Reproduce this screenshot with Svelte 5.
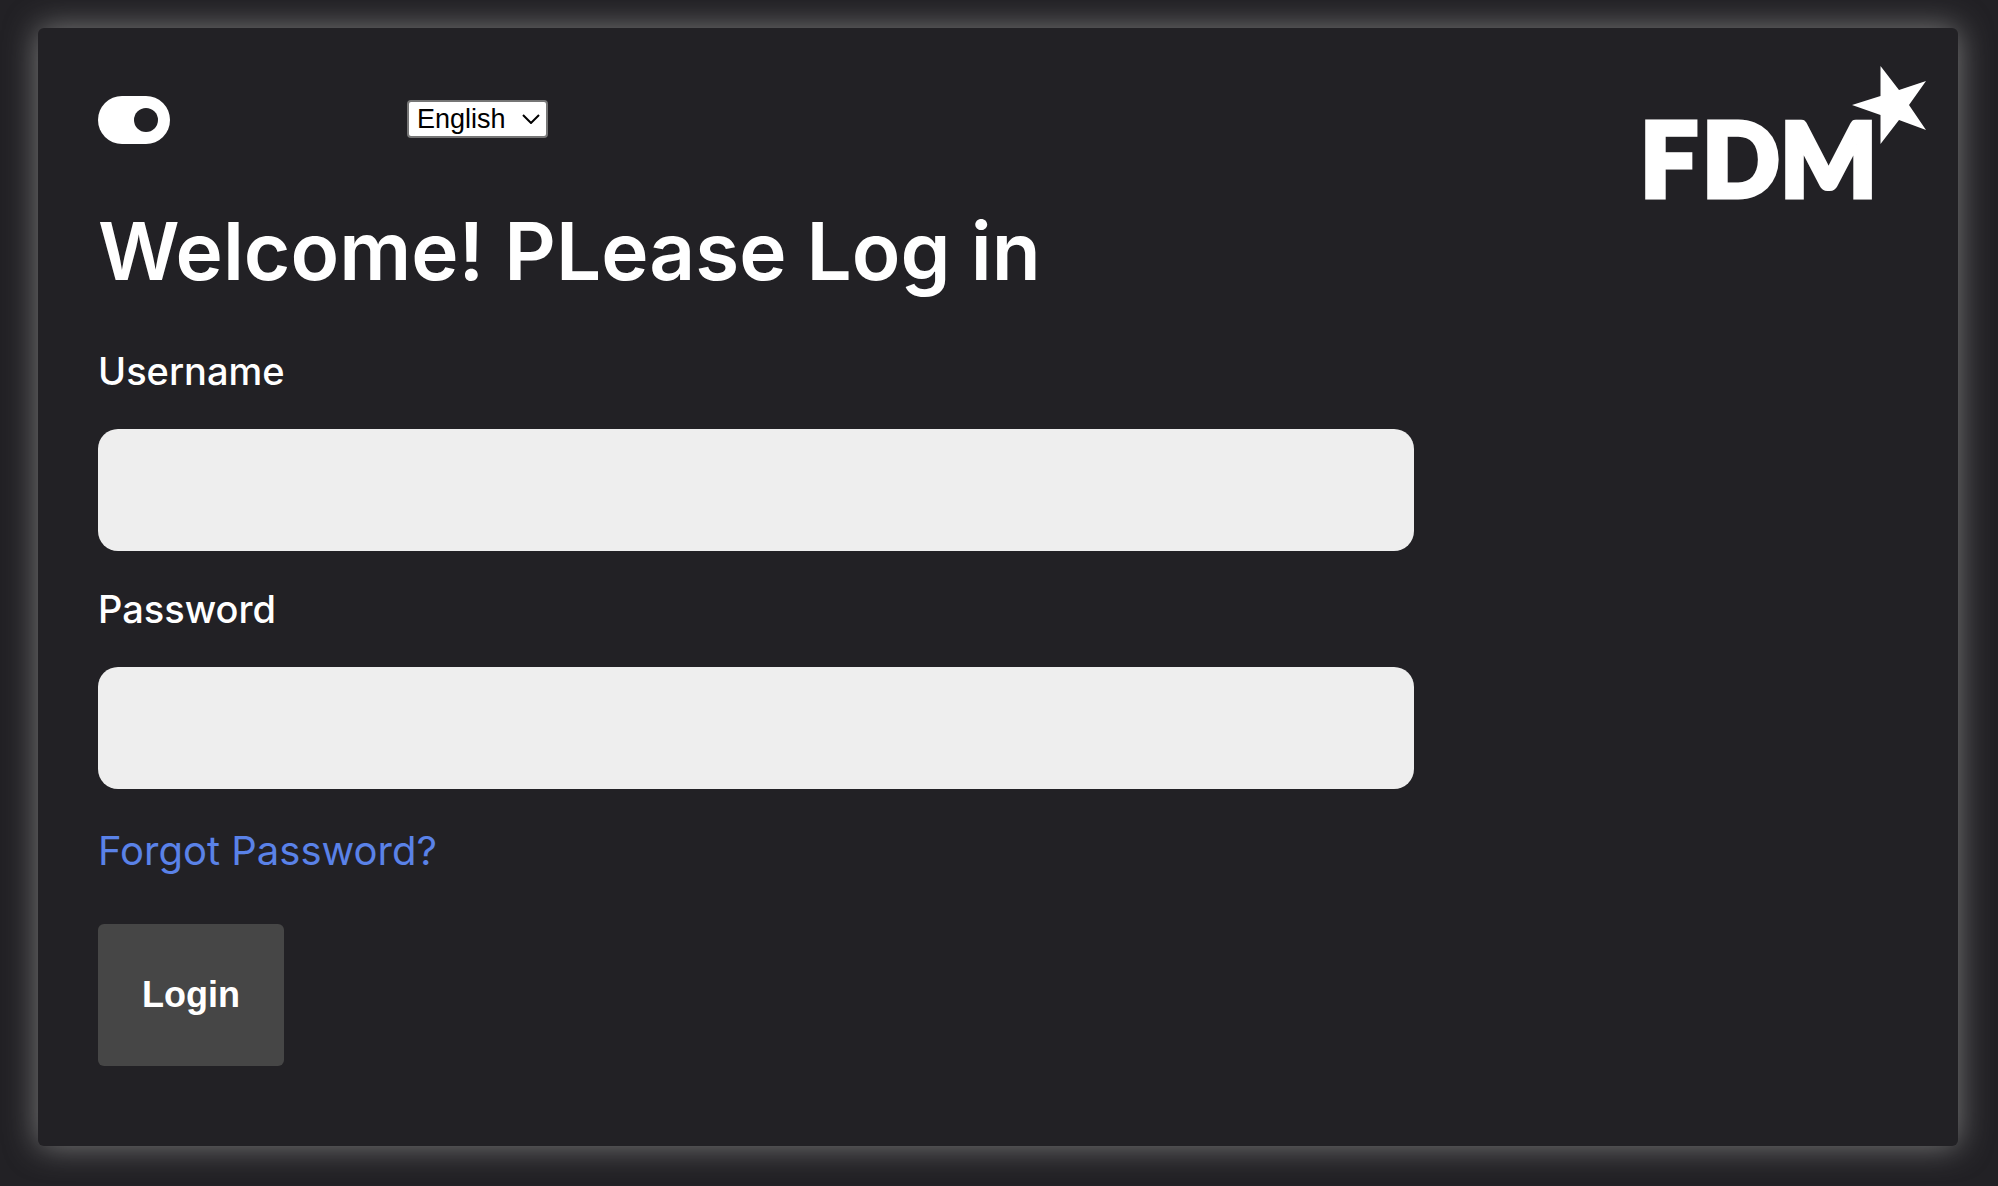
<script lang="ts">
  let dark = $state(true);
  let language = $state('en');
  let username = $state('');
  let password = $state('');
</script>

<main class="card">
  <div class="content">
    <div class="toolbar">
      <input class="toggle" type="checkbox" role="switch" aria-label="Dark mode" bind:checked={dark} />
      <div class="language">
        <select aria-label="Language" bind:value={language}>
          <option value="en">English</option>
        </select>
        <svg class="chevron" viewBox="0 0 18 10" aria-hidden="true">
          <path d="M1 1 L9 9 L17 1" />
        </svg>
      </div>
    </div>

    <h1>Welcome! PLease Log in</h1>

    <form onsubmit={(e) => e.preventDefault()}>
      <label for="username">Username</label>
      <input class="field" id="username" type="text" bind:value={username} />
      <label for="password">Password</label>
      <input class="field" id="password" type="password" bind:value={password} />
      <a href="#forgot">Forgot Password?</a>
      <button type="submit">Login</button>
    </form>
  </div>

  <svg class="logo" viewBox="-16 0 300 160" role="img" aria-label="FDM">
    <text y="131" x="-2 60 138">FDM</text>
    <path d="M238.500 0 L257 24 L284 15 L267 39 L284 64 L257 54 L238.500 78 L238.500 49 L210 39 L238.500 30 Z" />
  </svg>
</main>

<style>
  :global(body) {
    margin: 0;
    background: #222125;
  }

  .card {
    display: flex;
    align-items: flex-start;
    box-sizing: border-box;
    margin: 28px 40px 40px 38px;
    padding: 38px 32px 80px 60px;
    border-radius: 6px;
    background: #222125;
    box-shadow: 0 0 32px #7c7c7c;
    color: #fff;
    font-family: Inter, 'Liberation Sans', sans-serif;
  }

  .content {
    flex: 0 0 72%;
    padding-top: 30px;
  }

  .toolbar {
    display: flex;
    align-items: center;
    gap: 237px;
    height: 48px;
  }

  .toggle {
    appearance: none;
    box-sizing: border-box;
    width: 72px;
    height: 48px;
    margin: 0;
    padding: 12px;
    border-radius: 24px;
    background: #fff;
  }

  .toggle::before {
    content: '';
    display: block;
    width: 24px;
    height: 24px;
    border-radius: 50%;
    background: #222125;
  }

  .toggle:checked::before {
    margin-left: auto;
  }

  .language {
    display: grid;
    align-items: center;
    padding-bottom: 2px;
  }

  select {
    grid-area: 1 / 1;
    appearance: none;
    box-sizing: border-box;
    width: 141px;
    height: 38px;
    padding: 0 8px;
    border: 2px solid #767676;
    border-radius: 4px;
    background: #fff;
    color: #000;
    font: 27px 'Liberation Sans', sans-serif;
  }

  .chevron {
    grid-area: 1 / 1;
    justify-self: end;
    width: 18px;
    height: 10px;
    margin-right: 8px;
    fill: none;
    stroke: #000;
    stroke-width: 2;
    pointer-events: none;
  }

  h1 {
    margin: 59px 0 50px;
    font-size: 80px;
    font-weight: 600;
    line-height: 96px;
    white-space: nowrap;
  }

  form {
    display: flex;
    flex-direction: column;
    align-items: flex-start;
  }

  label {
    margin-bottom: 36px;
    font-size: 38px;
    font-weight: 500;
    line-height: 44px;
  }

  .field {
    box-sizing: border-box;
    width: 100%;
    height: 122px;
    margin-bottom: 36px;
    padding: 0 32px;
    border: 0;
    border-radius: 20px;
    background: #eee;
    font: 38px Inter, sans-serif;
  }

  a {
    margin: 4px 0 51px;
    color: #5a82e8;
    font-size: 40px;
    line-height: 44px;
    text-decoration: none;
  }

  button {
    padding: 50px 44px;
    border: 0;
    border-radius: 6px;
    background: #464646;
    color: #fff;
    font: bold 36px/42px 'Liberation Sans', sans-serif;
  }

  .logo {
    flex: none;
    width: 300px;
    height: 160px;
    margin-left: auto;
    fill: #fff;
    font: 900 102px Lato, sans-serif;
  }

  .logo text {
    stroke: #fff;
    stroke-width: 5px;
  }
</style>
